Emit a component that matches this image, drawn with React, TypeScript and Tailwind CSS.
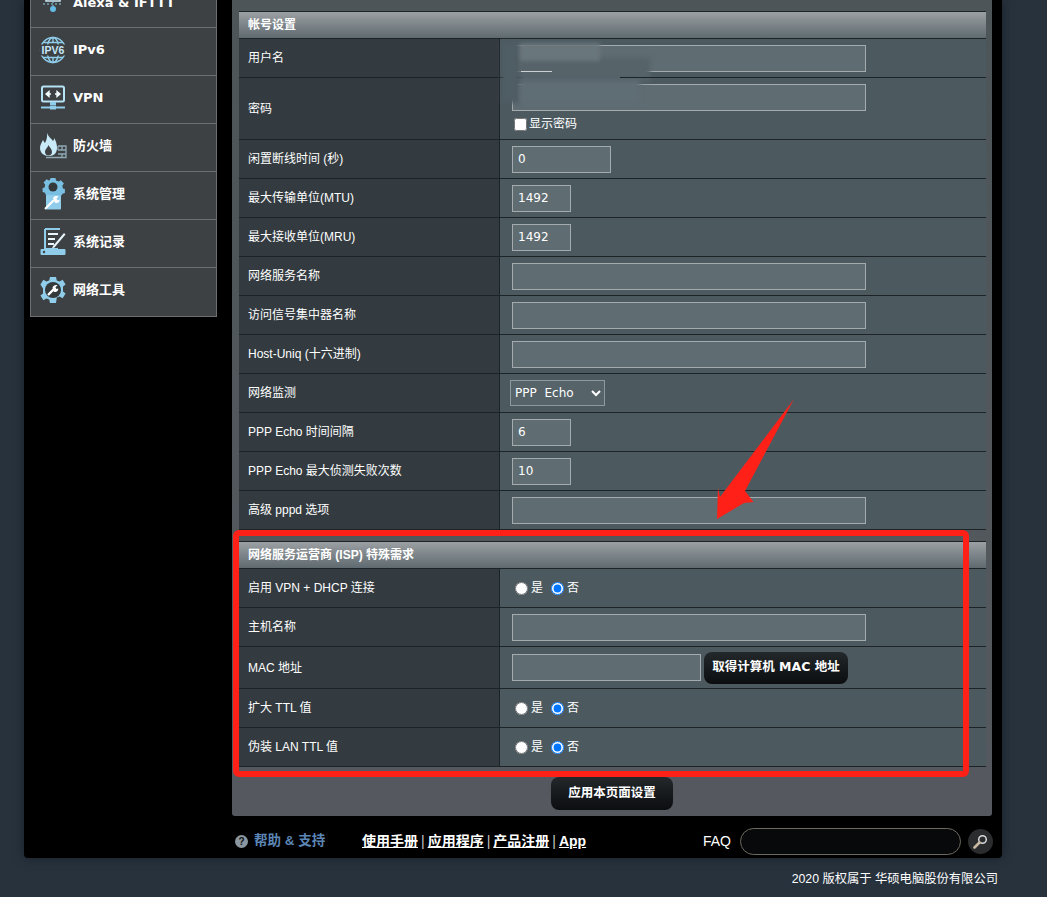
import React from "react";

const FONT = "font-['Liberation_Sans','Noto_Sans_CJK_SC',sans-serif]";

function IconIpv6() {
  return (
    <svg width="28" height="28" viewBox="0 0 28 28" fill="none" stroke="#8fcdea" strokeWidth="1.4">
      <circle cx="14" cy="14" r="12.5" />
      <ellipse cx="14" cy="14" rx="6" ry="12.5" />
      <path d="M4 6.500h20M4 21.500h20M14 1.500v5M14 21.500v5" />
      <rect x="0.500" y="8.500" width="27" height="11" fill="#3e4143" stroke="none" />
      <text x="14" y="18" textAnchor="middle" fontSize="10.500" fontWeight="700" fontFamily="Liberation Sans" fill="#c5e8f8" stroke="none">IPV6</text>
    </svg>
  );
}

function IconVpn() {
  return (
    <svg width="26" height="26" viewBox="0 0 26 26" fill="none">
      <rect x="2" y="1.500" width="22" height="15" rx="1.500" stroke="#b6e2f5" strokeWidth="2" />
      <path d="M6 9h5M6 9l3-2.500v5zM20 9h-5M20 9l-3-2.500v5z" stroke="#f1fafd" strokeWidth="1.300" fill="#f1fafd" />
      <rect x="10" y="17" width="6" height="3" fill="#8fcdea" />
      <path d="M1 22.500h24" stroke="#8fcdea" strokeWidth="2" />
      <rect x="10" y="20.500" width="6" height="4" fill="#8fcdea" />
    </svg>
  );
}

function IconFirewall() {
  return (
    <svg width="28" height="28" viewBox="0 0 28 28" fill="none">
      <path d="M8 1c1.500 4 4 5 6 8 1-1 1-2 1-3 2 3 3 6 3 10 0 5-3 8-8 8s-9-3-9-8c0-3 1.500-5 3-8 .7 1 1 2 2 3 1.500-3 2.500-6 2-10z" fill="#c9ebf9" />
      <path d="M9.500 13c1 2.500 3.500 4 3.500 7 0 2-1.500 3.500-3.500 3.500S6 22 6 20c0-3 2.500-4 3.500-7z" fill="#3e4143" />
      <path d="M7 25.500h20V14h-8M19 18h8M19 22h8M23 14v4M19 14v4M23 22v3.500" stroke="#8fa9b5" strokeWidth="1.300" />
    </svg>
  );
}

function IconAdmin() {
  return (
    <svg width="24" height="32" viewBox="0 0 24 32" fill="none">
      <path d="M9.500 0h5l.6 2.600 2.600 1 2.200-1.400 3 3.400-1.600 2.200.6 2.600 2 .6v4l-2.400.8-1 1.700H5L4 14.800 1.600 14v-4l2-.6.600-2.600L2.600 4.600l3-3.400 2.200 1.400 1.100-.6z" fill="#79bfe2" />
      <circle cx="12" cy="9" r="4.500" fill="#33383b" />
      <rect x="5" y="17" width="15" height="14.500" rx="1" fill="#8fcdea" />
      <path d="M4 31l9-9" stroke="#fff" strokeWidth="2.200" />
      <path d="M12 20c1-2 3.500-2.500 5.500-1.500l-2 2 1 2 2-1c.5 2.200-1.800 4.500-4.500 3.200z" fill="#fff" />
    </svg>
  );
}

function IconLog() {
  return (
    <svg width="26" height="28" viewBox="0 0 26 28" fill="none">
      <path d="M5 1h15M5 1v20h13" stroke="#8fcdea" strokeWidth="2" />
      <path d="M8 6h10M8 11h7M8 16h6" stroke="#e8f6fc" strokeWidth="2" />
      <path d="M13 18l11-13 1.500 1.500-11 13-2.500 1z" fill="#e8f6fc" />
      <rect x="0.500" y="21" width="25" height="6" rx="1" fill="#8fcdea" />
      <circle cx="4" cy="24" r="1.200" fill="#3e4143" />
    </svg>
  );
}

function IconTools() {
  return (
    <svg width="28" height="28" viewBox="0 0 28 28" fill="none">
      <path d="M11 1h6l.8 3.400 2.800 1.200 3-1.800 3 4.600-2.600 2.200v4.800l2.600 2.200-3 4.600-3-1.800-2.800 1.200L17 27h-6l-.8-3.400-2.800-1.200-3 1.800-3-4.600L4 17.400v-4.800L1.400 8.400l3-4.600 3 1.800 2.800-1.200z" fill="#8fcdea" />
      <circle cx="14" cy="14" r="8" fill="#33383b" />
      <path d="M9 19l6-6" stroke="#fff" strokeWidth="2.400" />
      <path d="M13.500 11.500c.7-2 3-3 5-2.200l-2 2 .8 1.700 1.900-.6c.4 2.400-2 4.300-4.400 3.400z" fill="#fff" />
    </svg>
  );
}

function IconAlexa() {
  return (
    <svg width="30" height="28" viewBox="0 0 30 28" fill="none">
      <rect x="8" y="4" width="14" height="8" stroke="#cfe9f6" strokeWidth="1.500" />
      <path d="M11 8h8" stroke="#e8f6fc" strokeWidth="1.500" />
      <circle cx="2.500" cy="8" r="2.500" fill="#e8f6fc" />
      <circle cx="27.500" cy="8" r="1.500" fill="#e8f6fc" />
      <path d="M15 12v6M5 15h20" stroke="#8fcdea" strokeWidth="1" strokeDasharray="2 2" />
      <circle cx="15" cy="20" r="3" fill="#63bbe6" />
    </svg>
  );
}

const menu = [
  { label: "Alexa & IFTTT", icon: <IconAlexa /> },
  { label: "IPv6", icon: <IconIpv6 /> },
  { label: "VPN", icon: <IconVpn /> },
  { label: "防火墙", icon: <IconFirewall /> },
  { label: "系统管理", icon: <IconAdmin /> },
  { label: "系统记录", icon: <IconLog /> },
  { label: "网络工具", icon: <IconTools /> },
];

function Sidebar() {
  return (
    <div className="w-[187px] border border-[#6d7072] border-t-0 bg-[#3e4143] mt-[-21px] pb-[1px] self-start">
      {menu.map((m, i) => (
        <div
          key={m.label}
          className={`h-[48px] flex items-center ${i > 0 ? "pb-[4px] border-t border-[#6d7072]" : ""}`}
        >
          <div className="w-[42px] flex justify-center shrink-0 pl-[2px]">{m.icon}</div>
          <span className="text-white font-bold text-[13px] font-['DejaVu_Sans','Noto_Sans_CJK_SC',sans-serif] whitespace-nowrap">
            {m.label}
          </span>
        </div>
      ))}
    </div>
  );
}

function TextInput({ w = "w-[354px]", value = "" }: { w?: string; value?: string }) {
  return (
    <input
      readOnly
      value={value}
      className={`${w} h-[27px] bg-[#5f6c72] border border-[#a3abae] px-[5px] text-white text-[12px] font-['DejaVu_Sans',sans-serif] outline-none`}
    />
  );
}

function Radios() {
  return (
    <div className="flex items-center text-white text-[12px]">
      <input type="radio" className="w-[13px] h-[13px] ml-[3px] mr-[3px]" />
      <span className="mr-[8px]">是</span>
      <input type="radio" defaultChecked className="w-[13px] h-[13px] mr-[3px]" />
      <span>否</span>
    </div>
  );
}

function Row({ label, h = "h-[39px]", children }: { label: string; h?: string; children?: React.ReactNode }) {
  return (
    <div className={`flex ${h} border-b border-[#1d2427]`}>
      <div className="w-[261px] shrink-0 bg-[#333b40] border-r border-[#1d2427] pl-[9px] flex items-center text-[12px] text-white">
        {label}
      </div>
      <div className="flex-1 bg-[#4c5a60] pl-[12px] flex items-center">{children}</div>
    </div>
  );
}

function SectionHead({ title }: { title: string }) {
  return (
    <div className="h-[28px] border-y border-[#1d2427] bg-gradient-to-b from-[#9ba0a3] to-[#5f6a70] pl-[9px] flex items-center text-[12px] font-bold text-white">
      {title}
    </div>
  );
}

function DarkButton({ children, className = "" }: { children: React.ReactNode; className?: string }) {
  return (
    <button className={`rounded-[8px] bg-gradient-to-b from-[#23282b] to-[#0c0e10] text-white text-[12.500px] font-bold font-['DejaVu_Sans','Noto_Sans_CJK_SC',sans-serif] ${className}`}>
      {children}
    </button>
  );
}

function Panel() {
  return (
    <div className="h-[816px] w-[760px] rounded-b-[3px] bg-gradient-to-b from-[#4d5558] to-[#55595f] pt-[11px] pl-[7px] pr-[6px]">
      <SectionHead title="帐号设置" />
      <Row label="用户名"><TextInput /></Row>
      <Row label="密码" h="h-[62px]">
        <div className="flex flex-col self-start pt-[6px]">
          <TextInput />
          <label className="flex items-center text-white text-[12px] mt-[4px] ml-[2px]">
            <input type="checkbox" className="w-[13px] h-[13px] mr-[2px]" />
            显示密码
          </label>
        </div>
      </Row>
      <Row label="闲置断线时间 (秒)"><TextInput w="w-[99px]" value="0" /></Row>
      <Row label="最大传输单位(MTU)"><TextInput w="w-[59px]" value="1492" /></Row>
      <Row label="最大接收单位(MRU)"><TextInput w="w-[59px]" value="1492" /></Row>
      <Row label="网络服务名称"><TextInput /></Row>
      <Row label="访问信号集中器名称"><TextInput /></Row>
      <Row label="Host-Uniq (十六进制)"><TextInput /></Row>
      <Row label="网络监测">
        <select className="w-[95px] h-[26px] ml-[-2px] bg-[#566369] border border-[#8f999d] text-white text-[12px] [word-spacing:4px] font-['DejaVu_Sans',sans-serif] outline-none">
          <option>PPP Echo</option>
        </select>
      </Row>
      <Row label="PPP Echo 时间间隔"><TextInput w="w-[59px]" value="6" /></Row>
      <Row label="PPP Echo 最大侦测失败次数"><TextInput w="w-[59px]" value="10" /></Row>
      <Row label="高级 pppd 选项"><TextInput /></Row>

      <div className="mt-[11px]">
        <SectionHead title="网络服务运营商 (ISP) 特殊需求" />
      </div>
      <Row label="启用 VPN + DHCP 连接"><Radios /></Row>
      <Row label="主机名称"><TextInput /></Row>
      <Row label="MAC 地址" h="h-[42px]">
        <TextInput w="w-[189px]" />
        <DarkButton className="w-[144px] h-[32px] ml-[3px]">取得计算机 MAC 地址</DarkButton>
      </Row>
      <Row label="扩大 TTL 值"><Radios /></Row>
      <Row label="伪装 LAN TTL 值"><Radios /></Row>

      <div className="flex justify-center mt-[10px] pr-[1px]">
        <DarkButton className="w-[122px] h-[33px]">应用本页面设置</DarkButton>
      </div>
    </div>
  );
}

function Footer() {
  return (
    <div className="h-[42px] w-[760px] pt-[8px] flex items-center text-[14px]">
      <span className="w-[13px] h-[13px] ml-[3px] mr-[6px] rounded-full bg-[#8a97a0] text-[#101214] text-[10px] font-bold flex items-center justify-center">?</span>
      <span className="text-[#5c86b5] text-[13.500px] font-bold w-[108px] whitespace-nowrap">帮助 &amp; 支持</span>
      <div className="text-white font-bold flex items-center gap-[3px] whitespace-nowrap">
        <span className="underline">使用手册</span>
        <span className="font-normal text-[#c8c8c8]">|</span>
        <span className="underline">应用程序</span>
        <span className="font-normal text-[#c8c8c8]">|</span>
        <span className="underline">产品注册</span>
        <span className="font-normal text-[#c8c8c8]">|</span>
        <span className="underline">App</span>
      </div>
      <div className="ml-auto flex items-center">
        <span className="text-white text-[14px] mr-[9px]">FAQ</span>
        <div className="w-[221px] h-[27px] rounded-full border border-[#6f6a60] bg-[#08090a]" />
        <div className="w-[25px] h-[25px] ml-[7px] mr-[-1px] rounded-full bg-[#2a2c2e] flex items-center justify-center">
          <svg width="15" height="15" viewBox="0 0 15 15" fill="none">
            <circle cx="9.500" cy="5.500" r="3.800" stroke="#d8d8d8" strokeWidth="1.500" />
            <path d="M6.500 8.500L1.500 13.500" stroke="#c9b9a0" strokeWidth="2.600" strokeLinecap="round" />
          </svg>
        </div>
      </div>
    </div>
  );
}

export default function App() {
  return (
    <div className={`${FONT} relative w-[1047px] h-[897px] overflow-hidden bg-[#27323d]`}>
      <div className="ml-[24px] w-[978px] h-[858px] bg-black rounded-b-[4px] shadow-[0_0_12px_rgba(0,0,0,0.35)] flex pl-[6px] gap-[15px]">
        <Sidebar />
        <div>
          <Panel />
          <Footer />
        </div>
      </div>
      <div className="text-right pr-[49px] pt-[12px] text-white text-[12.300px]">2020 版权属于 华硕电脑股份有限公司</div>

      {/* 打码 */}
      <div className="absolute left-[502px] top-[41px] w-[18px] h-[62px] bg-[#4f5d64] blur-[2px]" />
      <div className="absolute left-[520px] top-[58px] w-[130px] h-[24px] bg-[#566369] blur-[2px]" />
      <div className="absolute left-[520px] top-[43px] w-[80px] h-[18px] bg-[#69767b] blur-[2px]" />
      <div className="absolute left-[520px] top-[80px] w-[120px] h-[24px] bg-[#5f6d74] blur-[2px]" />
      <div className="absolute left-[521px] top-[71px] w-[31px] h-px bg-white/70" />
      <div className="absolute left-[620px] top-[77px] w-[60px] h-px bg-[#1d2427]" />

      {/* 标注 */}
      <div className="absolute left-[233px] top-[530px] w-[736px] h-[247px] border-[6px] border-[#ff2018] rounded-[6px]" />
      <svg className="absolute left-[710px] top-[395px]" width="90" height="130" viewBox="0 0 90 130">
        <path d="M84 4L35 96 43.500 107 34 108 7 124 8 93 10 102z" fill="#ff2018" />
      </svg>
    </div>
  );
}
